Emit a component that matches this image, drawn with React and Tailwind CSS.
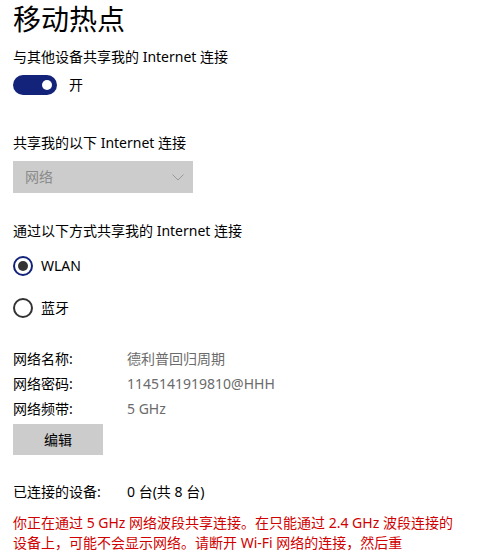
export default function App() {
  const font = { fontFamily: '"Segoe UI", "Noto Sans", "Noto Sans CJK SC", sans-serif' };
  return (
    <div className="w-[494px] h-[558px] overflow-hidden bg-white pl-[13px] text-[14px] text-black" style={font}>
      <div className="text-[28px] leading-[38px]">移动热点</div>
      <div className="mt-[9px] leading-[20px]">与其他设备共享我的 Internet 连接</div>
      <div className="mt-[8px] flex items-center h-[20px]">
        <div className="w-[44px] h-[20px] rounded-full bg-[#13237a] flex items-center justify-end pr-[5px]">
          <div className="w-[10px] h-[10px] rounded-full bg-white" />
        </div>
        <span className="ml-[12px] leading-[20px]">开</span>
      </div>
      <div className="mt-[38px] leading-[20px]">共享我的以下 Internet 连接</div>
      <div className="mt-[8px] w-[180px] h-[32px] bg-[#cccccc] flex items-center justify-between pl-[12px] pr-[9px]">
        <span className="text-[#8a8a8a] leading-[20px]">网络</span>
        <svg width="12" height="7" viewBox="0 0 12 7" fill="none">
          <path d="M0.5 0.5 L6 6 L11.5 0.5" stroke="#9a9a9a" strokeWidth="1" />
        </svg>
      </div>
      <div className="mt-[28px] leading-[20px]">通过以下方式共享我的 Internet 连接</div>
      <div className="mt-[15px] flex items-center h-[20px]">
        <div className="w-[20px] h-[20px] rounded-full border-2 border-[#13237a] flex items-center justify-center">
          <div className="w-[10px] h-[10px] rounded-full bg-[#333333]" />
        </div>
        <span className="ml-[8px] leading-[20px]">WLAN</span>
      </div>
      <div className="mt-[22px] flex items-center h-[20px]">
        <div className="w-[20px] h-[20px] rounded-full border-2 border-[#333333]" />
        <span className="ml-[8px] leading-[20px]">蓝牙</span>
      </div>
      <div className="mt-[28px] flex flex-col">
        <div className="flex h-[25px] items-center">
          <span className="w-[114px]">网络名称:</span>
          <span className="text-[#6b6b6b]">德利普回归周期</span>
        </div>
        <div className="flex h-[25px] items-center">
          <span className="w-[114px]">网络密码:</span>
          <span className="text-[#6b6b6b]">1145141919810@HHH</span>
        </div>
        <div className="flex h-[25px] items-center">
          <span className="w-[114px]">网络频带:</span>
          <span className="text-[#6b6b6b]">5 GHz</span>
        </div>
      </div>
      <div className="mt-[3px] w-[90px] h-[31px] bg-[#cccccc] flex items-center justify-center">编辑</div>
      <div className="mt-[27px] flex leading-[20px]">
        <span className="w-[114px]">已连接的设备:</span>
        <span>0 台(共 8 台)</span>
      </div>
      <div className="mt-[11px] leading-[20px] text-[#d00000] whitespace-nowrap">
        <div>你正在通过 5 GHz 网络波段共享连接。在只能通过 2.4 GHz 波段连接的</div>
        <div>设备上，可能不会显示网络。请断开 Wi-Fi 网络的连接，然后重</div>
      </div>
    </div>
  );
}
